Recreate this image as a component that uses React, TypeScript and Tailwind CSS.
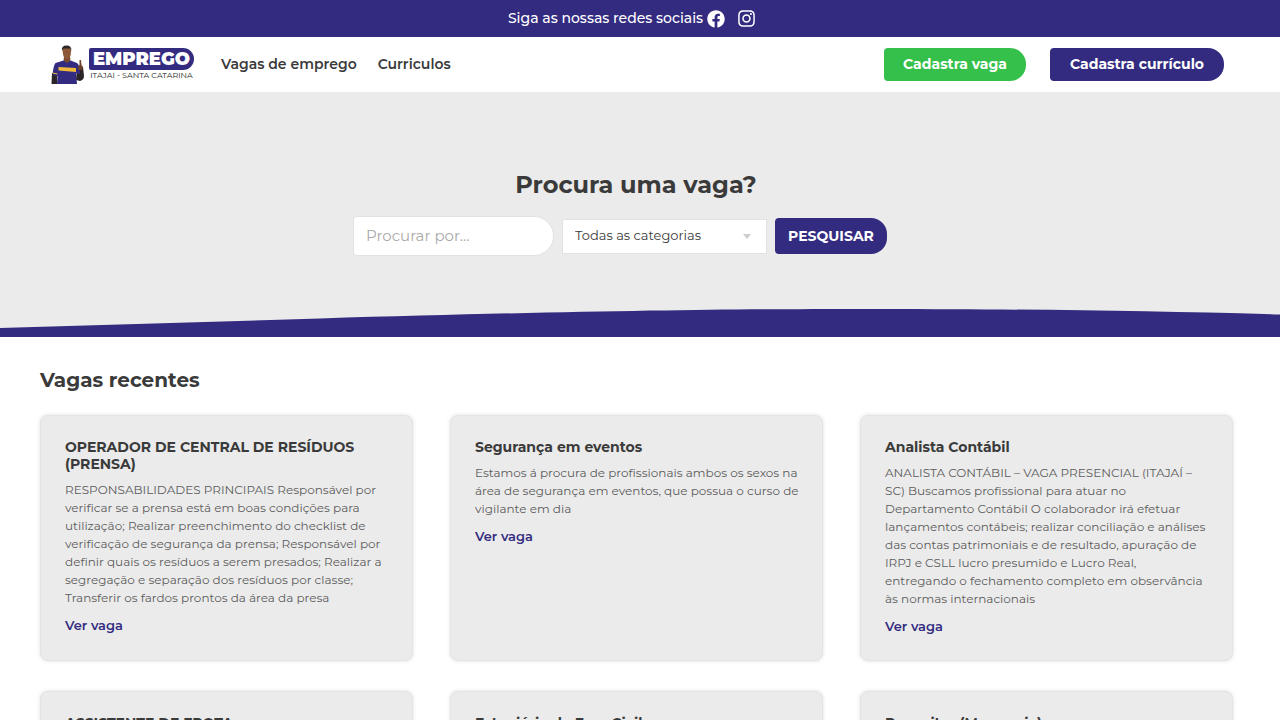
import React from "react";

import {FaFacebook, FaInstagram} from "react-icons/fa";

interface iJob {
	title: string;
	description: string;
}

interface iNavItem {
	heading: string;
	href: string;
}

const navItems: iNavItem[] = [
	{heading: "Vagas de emprego", href: "#vagas"},
	{heading: "Curriculos", href: "#curriculos"},
];

const jobs: iJob[] = [
	{
		title: "OPERADOR DE CENTRAL DE RESÍDUOS (PRENSA)",
		description:
			"RESPONSABILIDADES PRINCIPAIS Responsável por verificar se a prensa está em boas condições para utilização; Realizar preenchimento do checklist de verificação de segurança da prensa; Responsável por definir quais os resíduos a serem presados; Realizar a segregação e separação dos resíduos por classe; Transferir os fardos prontos da área da presa",
	},
	{
		title: "Segurança em eventos",
		description:
			"Estamos á procura de profissionais ambos os sexos na área de segurança em eventos, que possua o curso de vigilante em dia",
	},
	{
		title: "Analista Contábil",
		description:
			"ANALISTA CONTÁBIL – VAGA PRESENCIAL (ITAJAÍ – SC) Buscamos profissional para atuar no Departamento Contábil O colaborador irá efetuar lançamentos contábeis; realizar conciliação e análises das contas patrimoniais e de resultado, apuração de IRPJ e CSLL lucro presumido e Lucro Real, entregando o fechamento completo em observância às normas internacionais",
	},
	{title: "ASSISTENTE DE FROTA", description: ""},
	{title: "Estagiário de Eng. Civil", description: ""},
	{title: "Repositor (Mercearia)", description: ""},
];

const Worker: React.FC = () => (
	<svg viewBox="0 0 34 40" className="h-10 w-[34px]" aria-hidden="true">
		<path d="M1 28 L6 28 L6 39 L0.500 39 Z" fill="#2b2625" />
		<path d="M26 22 L32 22 L33 31 Q33 35 29 36 L25 35 Z" fill="#2b2625" />
		<path d="M13 11 L19 11 L19.500 17 L16 19 L12.500 17 Z" fill="#7b4a2f" />
		<path d="M11.500 5 Q11.500 1.500 15.500 1.500 Q20 1.500 20 6 Q20 14 15.800 14 Q12 14 11.500 5 Z" fill="#8c5737" />
		<path d="M11 6 Q10 0.500 15.500 0.500 Q21 0.500 20.300 6 L19.300 3.500 L12.300 3.500 Z" fill="#2b2625" />
		<path d="M12.500 15.500 L4.500 18 Q2.500 20 1.500 30 L6.500 31 L6 39 L26 39 L25 28 L29 29 Q29 20 26 18 L19.500 15.500 L16 18 Z" fill="#332b80" />
		<path d="M7.500 22 L25 23 L25 27 L7.500 25.500 Z" fill="#f0b93e" />
		<path d="M1.500 28 L6.500 29" stroke="#f0b93e" strokeWidth="1" />
		<path d="M27 22 L28.500 20 L28.500 15 L30 15 L30.500 20 L32 22 L31 25 L27 25 Z" fill="#6b412c" />
	</svg>
);

const Logo: React.FC = () => (
	<a href="#inicio" className="flex items-center gap-1">
		<Worker />
		<span className="flex flex-col items-center">
			<span className="flex h-[22px] w-[105px] items-center justify-center rounded-l-xs rounded-r-[11px] bg-[#332b80] text-[18px] font-black text-white">
				EMPREGO
			</span>
			<span className="text-[8px] leading-[11px] text-[#222222]">
				ITAJAI - SANTA CATARINA
			</span>
		</span>
	</a>
);

const TopBar: React.FC = () => (
	<div className="flex h-[37px] items-center justify-center bg-[#332b80] pr-4 text-white">
		<span className="mr-1 text-[14px] font-medium">Siga as nossas redes sociais</span>
		<a href="#facebook" aria-label="Facebook" className="mr-3">
			<FaFacebook size={18} />
		</a>
		<a href="#instagram" aria-label="Instagram">
			<FaInstagram size={19} />
		</a>
	</div>
);

const Header: React.FC = () => (
	<header className="flex h-[55px] items-center bg-white pr-14 pl-[51px]">
		<Logo />
		<nav className="ml-[27px] flex gap-[21px] text-[14px] font-semibold">
			{navItems.map((item) => (
				<a key={item.href} href={item.href}>
					{item.heading}
				</a>
			))}
		</nav>
		<div className="ml-auto flex gap-6 text-[14px] font-bold text-white">
			<a
				href="#cadastra-vaga"
				className="flex h-[33px] w-[142px] items-center justify-center rounded-l-sm rounded-r-2xl bg-[#34c04a]"
			>
				Cadastra vaga
			</a>
			<a
				href="#cadastra-curriculo"
				className="flex h-[33px] w-[174px] items-center justify-center rounded-l-sm rounded-r-2xl bg-[#332b80]"
			>
				Cadastra currículo
			</a>
		</div>
	</header>
);

const Hero: React.FC = () => (
	<section className="flex flex-col items-center bg-[#ebebeb] pt-[78px]">
		<h1 className="pr-2 text-[24px] leading-[30px] font-bold">Procura uma vaga?</h1>
		<form className="mt-4 flex items-center gap-2 pr-10">
			<input
				type="text"
				aria-label="Procurar por"
				placeholder="Procurar por..."
				className="h-10 w-[201px] rounded-l-sm rounded-r-[20px] border border-[#e2e2e2] bg-white px-3 pb-[2px] text-[15px] placeholder:text-[#aaaaaa]"
			/>
			<div className="relative">
				<select
					aria-label="Categoria"
					className="h-[35px] w-[205px] appearance-none border border-[#e2e2e2] bg-white px-3 text-[13px]"
				>
					<option>Todas as categorias</option>
				</select>
				<span className="pointer-events-none absolute top-[15px] right-4 border-x-4 border-t-5 border-x-transparent border-t-[#cccccc]" />
			</div>
			<button
				type="button"
				className="h-9 w-28 rounded-l-sm rounded-r-2xl bg-[#332b80] text-[14px] font-bold text-white"
			>
				PESQUISAR
			</button>
		</form>
		{/* Curved divider */}
		<svg
			viewBox="0 0 1280 29"
			preserveAspectRatio="none"
			className="mt-[52px] block h-[29px] w-full"
			aria-hidden="true"
		>
			<path d="M0 20 L320 10.500 C600 2 760 0.700 880 0.900 C1040 1.200 1150 3 1280 6.500 L1280 29 L0 29 Z" fill="#332b80" />
		</svg>
	</section>
);

const JobCard: React.FC<iJob> = ({title, description}) => (
	<article className="min-h-[246px] rounded-lg border border-[#e4e4e4] bg-[#ebebeb] py-[23px] pr-[22px] pl-6 shadow-[0_0_4px_rgba(0,0,0,0.12)]">
		<h3 className="text-[14px] leading-[17px] font-bold">{title}</h3>
		<p className="mt-2 text-[12px] leading-[18px] text-[#5c5c5c]">{description}</p>
		<a
			href="#vaga"
			className="mt-[9px] block text-[13px] leading-[18px] font-semibold text-[#332b80]"
		>
			Ver vaga
		</a>
	</article>
);

const App: React.FC = () => {
	return (
		<div className="min-h-screen bg-white font-['Montserrat','Inter',sans-serif] text-[#3a3a3a]">
			<TopBar />
			<Header />
			<main>
				<Hero />
				<section className="pt-[30px] pr-[47px] pb-10 pl-10">
					<h2 className="text-[20px] leading-[26px] font-bold">Vagas recentes</h2>
					<div className="mt-[22px] grid grid-cols-3 gap-x-[37px] gap-y-[30px]">
						{jobs.map((job) => (
							<JobCard key={job.title} {...job} />
						))}
					</div>
				</section>
			</main>
		</div>
	);
};

export default App;
